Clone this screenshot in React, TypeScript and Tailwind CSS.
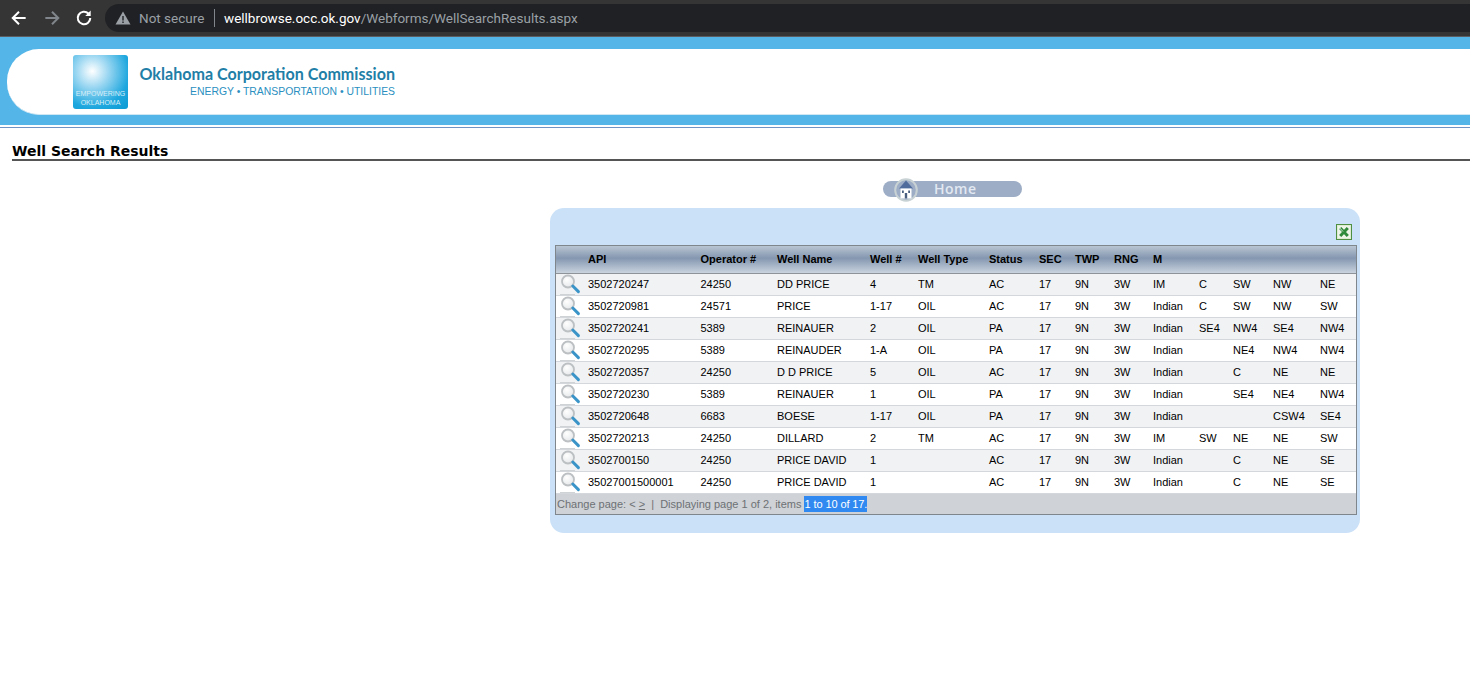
const wells = [
  ["3502720247", "24250", "DD PRICE", "4", "TM", "AC", "17", "9N", "3W", "IM", "C", "SW", "NW", "NE"],
  ["3502720981", "24571", "PRICE", "1-17", "OIL", "AC", "17", "9N", "3W", "Indian", "C", "SW", "NW", "SW"],
  ["3502720241", "5389", "REINAUER", "2", "OIL", "PA", "17", "9N", "3W", "Indian", "SE4", "NW4", "SE4", "NW4"],
  ["3502720295", "5389", "REINAUDER", "1-A", "OIL", "PA", "17", "9N", "3W", "Indian", "", "NE4", "NW4", "NW4"],
  ["3502720357", "24250", "D D PRICE", "5", "OIL", "AC", "17", "9N", "3W", "Indian", "", "C", "NE", "NE"],
  ["3502720230", "5389", "REINAUER", "1", "OIL", "PA", "17", "9N", "3W", "Indian", "", "SE4", "NE4", "NW4"],
  ["3502720648", "6683", "BOESE", "1-17", "OIL", "PA", "17", "9N", "3W", "Indian", "", "", "CSW4", "SE4"],
  ["3502720213", "24250", "DILLARD", "2", "TM", "AC", "17", "9N", "3W", "IM", "SW", "NE", "NE", "SW"],
  ["3502700150", "24250", "PRICE DAVID", "1", "", "AC", "17", "9N", "3W", "Indian", "", "C", "NE", "SE"],
  ["35027001500001", "24250", "PRICE DAVID", "1", "", "AC", "17", "9N", "3W", "Indian", "", "C", "NE", "SE"],
];

const headers = ["API", "Operator #", "Well Name", "Well #", "Well Type", "Status", "SEC", "TWP", "RNG", "M", "", "", "", ""];

const gridCols =
  "grid grid-cols-[32px_112.5px_76.5px_93px_48px_71px_50px_36px_39px_39px_46px_34px_40px_47px_36px]";

const Magnifier = () => (
  <svg width="22" height="22" viewBox="0 0 22 22" className="ml-[4px]">
    <defs>
      <radialGradient id="lens" cx="40%" cy="35%" r="70%">
        <stop offset="0%" stopColor="#ffffff" />
        <stop offset="100%" stopColor="#e4e6e8" />
      </radialGradient>
    </defs>
    <path d="M0 20.500h15" stroke="#d0d3d6" strokeWidth="1" />
    <circle cx="8" cy="7.500" r="6" fill="url(#lens)" stroke="#bcc0c3" strokeWidth="1.800" />
    <path d="M12.800 12l5.600 5.600" stroke="#3a94c8" strokeWidth="3" strokeLinecap="round" />
  </svg>
);

const ExcelIcon = () => (
  <svg width="16" height="16" viewBox="0 0 16 16">
    <rect x="0.500" y="0.500" width="15" height="15" fill="#dcebd2" stroke="#4f8f42" />
    <rect x="2" y="2" width="12" height="12" fill="#eef5e8" />
    <path d="M4.200 4l7.600 8M11.800 4l-7.600 8" stroke="#2f8a3a" strokeWidth="3" />
    <path d="M3.500 3.800l3.500 3.700" stroke="#ffffff" strokeWidth="0.800" />
  </svg>
);

const App = () => {
  return (
    <div className="w-[1470px] h-[682px] overflow-hidden bg-white font-['Liberation_Sans',sans-serif]">
      <div className="h-[37px] bg-[#353535] flex items-center border-b border-[#5c5d60]">
        <div className="flex items-center w-[105px] pl-[9px] gap-[12.500px]">
          <svg width="20" height="20" viewBox="0 0 24 24" fill="none" stroke="#ffffff" strokeWidth="2.400">
            <path d="M20 12H5M12 4.500L4.500 12l7.500 7.500" />
          </svg>
          <svg width="20" height="20" viewBox="0 0 24 24" fill="none" stroke="#80868b" strokeWidth="2.400">
            <path d="M4 12h15M12 4.500l7.500 7.500-7.500 7.500" />
          </svg>
          <svg width="20" height="20" viewBox="0 0 24 24" fill="none" stroke="#ffffff" strokeWidth="2.500">
            <path d="M19.500 12a7.500 7.500 0 1 1-2.200-5.300" />
            <path d="M20 3v6.500h-6.500Z" fill="#ffffff" stroke="none" />
          </svg>
        </div>
        <div className="flex-1 h-[28px] bg-[#202124] rounded-l-[14px] flex items-center pl-[9px] font-['Roboto',sans-serif] text-[13.500px] whitespace-nowrap">
          <svg width="18" height="18" viewBox="0 0 18 18">
            <path d="M9 2.500L16.500 15.500H1.500Z" fill="#9aa0a6" />
            <path d="M9 7v4.500M9 12.500v1.500" stroke="#202124" strokeWidth="1.400" />
          </svg>
          <span className="ml-[7px] w-[67px] text-[#9aa0a6]">Not secure</span>
          <span className="mx-[8px] w-px h-[18px] bg-[#80868b]" />
          <span className="ml-[1px] text-white">wellbrowse.occ.ok.gov</span>
          <span className="text-[#9aa0a6]">/Webforms/WellSearchResults.aspx</span>
        </div>
      </div>

      <div className="h-[88px] bg-[#54b6e8] pt-[12px]">
        <div className="h-[66px] ml-[7px] bg-white rounded-l-[32px] border-b border-[#cfe6f3] flex items-start">
          <div className="mt-[6px] ml-[66px] w-[55px] h-[54px] rounded-[3px] bg-[radial-gradient(circle_at_35%_30%,#ffffff_0%,#9ed8f2_30%,#1ea7de_70%,#0a9ad4_100%)] flex flex-col justify-end items-center pb-[2px] text-[7px] leading-[9px] text-[#d8eef8]">
            <span>EMPOWERING</span>
            <span>OKLAHOMA</span>
          </div>
          <div className="ml-[12px] mt-[16px] w-[255px] flex flex-col items-end">
            <span className="font-['Lato',sans-serif] font-bold text-[16.100px] leading-[18px] text-[#217ea6] whitespace-nowrap">
              Oklahoma Corporation Commission
            </span>
            <span className="mt-[2px] text-[10.400px] leading-[14px] text-[#2a8fc0] whitespace-nowrap">
              ENERGY • TRANSPORTATION • UTILITIES
            </span>
          </div>
        </div>
      </div>

      <div className="mt-[2px] h-px bg-[#6f93c4]" />

      <div className="ml-[12px] mt-[15px] h-[18px] border-b-2 border-[#555555] font-['DejaVu_Sans',sans-serif] font-bold text-[14px] leading-[16px] text-black">
        Well Search Results
      </div>

      <div className="ml-[550px] w-[810px]">
        <div className="relative mt-[20px] ml-[333px] w-[139px] h-[16px] rounded-full bg-[#9dadc6] flex items-center pb-[1px] pl-[51px] font-['Open_Sans',sans-serif] font-semibold text-[14px] tracking-[0.500px] text-[#e3e9f2]">
          Home
          <svg width="24" height="24" viewBox="0 0 24 24" className="absolute left-[11px] top-[-3px]">
            <circle cx="12" cy="12" r="10.800" fill="#9dadc6" stroke="#c8d2d4" strokeWidth="2" />
            <path d="M12 2.500L19 10.500H5Z" fill="#4f6c9c" />
            <path d="M6.500 10.500h11v10h-11Z" fill="#ffffff" />
            <path d="M10.800 15h2.400v5.500h-2.400ZM8 12.500h1.800v2.500H8ZM14.200 12.500H16v2.500h-1.800Z" fill="#4a5f80" />
          </svg>
        </div>

        <div className="mt-[11px] h-[325px] rounded-[14px] bg-[#cbe1f7] px-[5px] pt-[16px]">
          <div className="flex justify-end pr-[3px]">
            <ExcelIcon />
          </div>
          <div className="mt-[5px] w-[802px] border border-[#7f868c] text-[11px] text-black">
            <div
              className={`${gridCols} h-[28px] items-center font-bold border-b border-[#8d9399] bg-[linear-gradient(#b9c5d2,#8497b0_45%,#c9d3de)]`}
            >
              <span />
              {headers.map((h, i) => (
                <span key={i} className="whitespace-nowrap">
                  {h}
                </span>
              ))}
            </div>
            {wells.map((row, r) => (
              <div
                key={r}
                className={`${gridCols} h-[22px] items-center border-b border-[#d4d7db] ${
                  r % 2 === 0 ? "bg-[#f0f2f4]" : "bg-white"
                }`}
              >
                <Magnifier />
                {row.map((cell, c) => (
                  <span key={c} className="whitespace-nowrap mb-[2px]">
                    {cell}
                  </span>
                ))}
              </div>
            ))}
            <div className="h-[20px] flex items-center pl-[1px] bg-[#cfd2d6] text-[#6d7175] whitespace-pre">
              <span>Change page: &lt; </span>
              <span className="underline">&gt;</span>
              <span>  |  Displaying page 1 of 2, items </span>
              <span className="bg-[#2f89f0] text-white tracking-[-0.100px]">1 to 10 of 17.</span>
            </div>
          </div>
        </div>
      </div>
    </div>
  );
};

export default App;
